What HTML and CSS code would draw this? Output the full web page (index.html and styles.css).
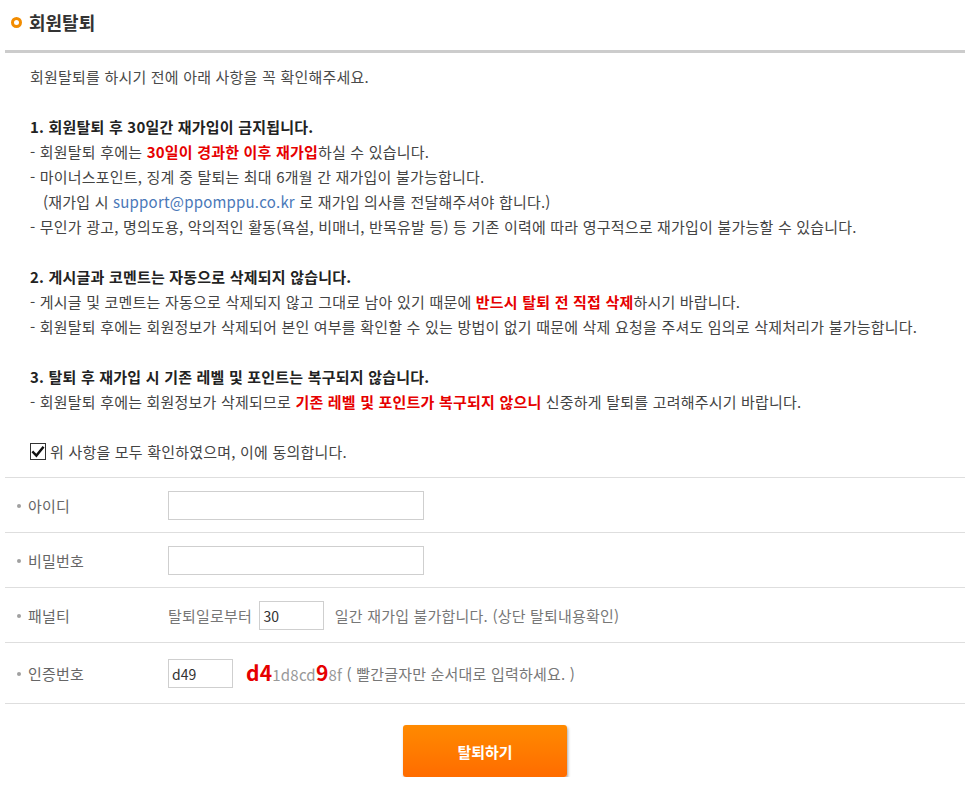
FILE: index.html
```html
<!DOCTYPE html>
<html lang="ko">
<head>
<meta charset="utf-8">
<title>회원탈퇴</title>
<link rel="stylesheet" href="styles.css">
</head>
<body>
<div class="wrap">
  <div class="head">
    <span class="ring"></span>
    <h1 class="title">회원탈퇴</h1>
  </div>
  <div class="notice">
    <p class="line intro">회원탈퇴를 하시기 전에 아래 사항을 꼭 확인해주세요.</p>

    <div class="block">
      <p class="line strong">1. 회원탈퇴 후 30일간 재가입이 금지됩니다.</p>
      <p class="line">- 회원탈퇴 후에는 <b class="red">30일이 경과한 이후 재가입</b>하실 수 있습니다.</p>
      <p class="line">- 마이너스포인트, 징계 중 탈퇴는 최대 6개월 간 재가입이 불가능합니다.</p>
      <p class="line indent">(재가입 시 <a class="mail" href="#">support@ppomppu.co.kr</a> 로 재가입 의사를 전달해주셔야 합니다.)</p>
      <p class="line">- 무인가 광고, 명의도용, 악의적인 활동(욕설, 비매너, 반목유발 등) 등 기존 이력에 따라 영구적으로 재가입이 불가능할 수 있습니다.</p>
    </div>

    <div class="block">
      <p class="line strong">2. 게시글과 코멘트는 자동으로 삭제되지 않습니다.</p>
      <p class="line">- 게시글 및 코멘트는 자동으로 삭제되지 않고 그대로 남아 있기 때문에 <b class="red">반드시 탈퇴 전 직접 삭제</b>하시기 바랍니다.</p>
      <p class="line">- 회원탈퇴 후에는 회원정보가 삭제되어 본인 여부를 확인할 수 있는 방법이 없기 때문에 삭제 요청을 주셔도 임의로 삭제처리가 불가능합니다.</p>
    </div>

    <div class="block">
      <p class="line strong">3. 탈퇴 후 재가입 시 기존 레벨 및 포인트는 복구되지 않습니다.</p>
      <p class="line">- 회원탈퇴 후에는 회원정보가 삭제되므로 <b class="red">기존 레벨 및 포인트가 복구되지 않으니</b> 신중하게 탈퇴를 고려해주시기 바랍니다.</p>
    </div>

    <label class="line agree">
      <span class="box"><svg width="14" height="14" viewBox="0 0 14 14"><path d="M2.2 7.2 L5.4 10.6 L11.8 2.6" fill="none" stroke="#111" stroke-width="2.4" stroke-linecap="square"/></svg></span>
      위 사항을 모두 확인하였으며, 이에 동의합니다.
    </label>
  </div>

  <div class="form">
    <div class="row">
      <div class="label">아이디</div>
      <div class="field"><input class="inp wide" type="text"></div>
    </div>
    <div class="row">
      <div class="label">비밀번호</div>
      <div class="field"><input class="inp wide" type="password"></div>
    </div>
    <div class="row">
      <div class="label">패널티</div>
      <div class="field gray">탈퇴일로부터 <input class="inp short pen" type="text" value="30"> 일간 재가입 불가합니다. (상단 탈퇴내용확인)</div>
    </div>
    <div class="row last">
      <div class="label">인증번호</div>
      <div class="field gray"><input class="inp short code" type="text" value="d49"><span class="captcha"><b class="big">d4</b>1d8cd<b class="big">9</b>8f</span> ( 빨간글자만 순서대로 입력하세요. )</div>
    </div>
  </div>

  <div class="actions">
    <button class="btn" type="button">탈퇴하기</button>
  </div>
</div>
</body>
</html>
```

FILE: styles.css
```css
* { box-sizing: border-box; }
html, body { margin: 0; padding: 0; background: #fff; }
body {
  font-family: "Noto Sans CJK KR", "Noto Sans", sans-serif;
  font-size: 15px;
  letter-spacing: 0.2px;
  color: #444;
}
.wrap {
  width: 960px;
  margin-left: 5px;
}
.head {
  display: flex;
  align-items: center;
  padding-left: 6px;
  padding-bottom: 6px;
  border-bottom: 3px solid #cccccc;
  height: 53px;
}
.ring {
  width: 11px;
  height: 11px;
  border: 3px solid #f28c00;
  border-radius: 50%;
  margin-right: 7px;
}
.title {
  margin: 0;
  font-size: 18px;
  font-weight: 700;
  letter-spacing: 0;
  color: #333;
  line-height: 24px;
}
.notice {
  padding: 11px 0 13px 25px;
}
.line {
  margin: 0;
  line-height: 25px;
  white-space: nowrap;
  color: #444;
}
.intro { color: #4a4a4a; }
.block { margin-top: 25px; }
.strong { font-weight: 700; color: #222; }
.red { color: #e60000; font-weight: 700; }
.indent { padding-left: 13px; }
.mail { color: #4a78b8; text-decoration: none; }
.agree {
  display: flex;
  align-items: center;
  margin-top: 25px;
}
.box {
  width: 16px;
  height: 17px;
  border: 1px solid #333;
  background: #fff;
  display: inline-flex;
  align-items: center;
  justify-content: center;
  margin-right: 4px;
}
.form { border-top: 1px solid #dedede; }
.row {
  display: flex;
  align-items: center;
  height: 55px;
  border-bottom: 1px solid #dedede;
}
.row.last { height: 61px; }
.label {
  width: 163px;
  padding-left: 23px;
  color: #666;
  position: relative;
}
.label::before {
  content: "";
  position: absolute;
  left: 12px;
  top: 50%;
  width: 4px;
  height: 4px;
  margin-top: -1px;
  border-radius: 50%;
  background: #a0a0a0;
}
.field {
  display: flex;
  align-items: center;
  white-space: pre;
}
.gray { color: #777; }
.inp {
  height: 29px;
  border: 1px solid #cfcfcf;
  padding: 2px 3px 0;
  font-family: inherit;
  font-size: 14px;
  letter-spacing: 0;
  color: #333;
  outline: none;
  background: #fff;
}
.wide { width: 256px; }
.short { width: 65px; }
.pen { margin: 0 6px 0 3px; }
.code { margin-right: 13px; }
.captcha { color: #999; }
.big { color: #e60000; font-size: 21px; font-weight: 700; line-height: 20px; }
.actions {
  display: flex;
  justify-content: center;
  padding-top: 21px;
}
.btn {
  width: 164px;
  height: 52px;
  border: 0;
  border-radius: 3px;
  background: linear-gradient(#ff8a00, #ff6c00);
  box-shadow: 1px 2px 3px rgba(0,0,0,0.35);
  color: #fff;
  font-family: inherit;
  font-size: 15px;
  font-weight: 700;
  letter-spacing: 0;
  cursor: pointer;
}
```
